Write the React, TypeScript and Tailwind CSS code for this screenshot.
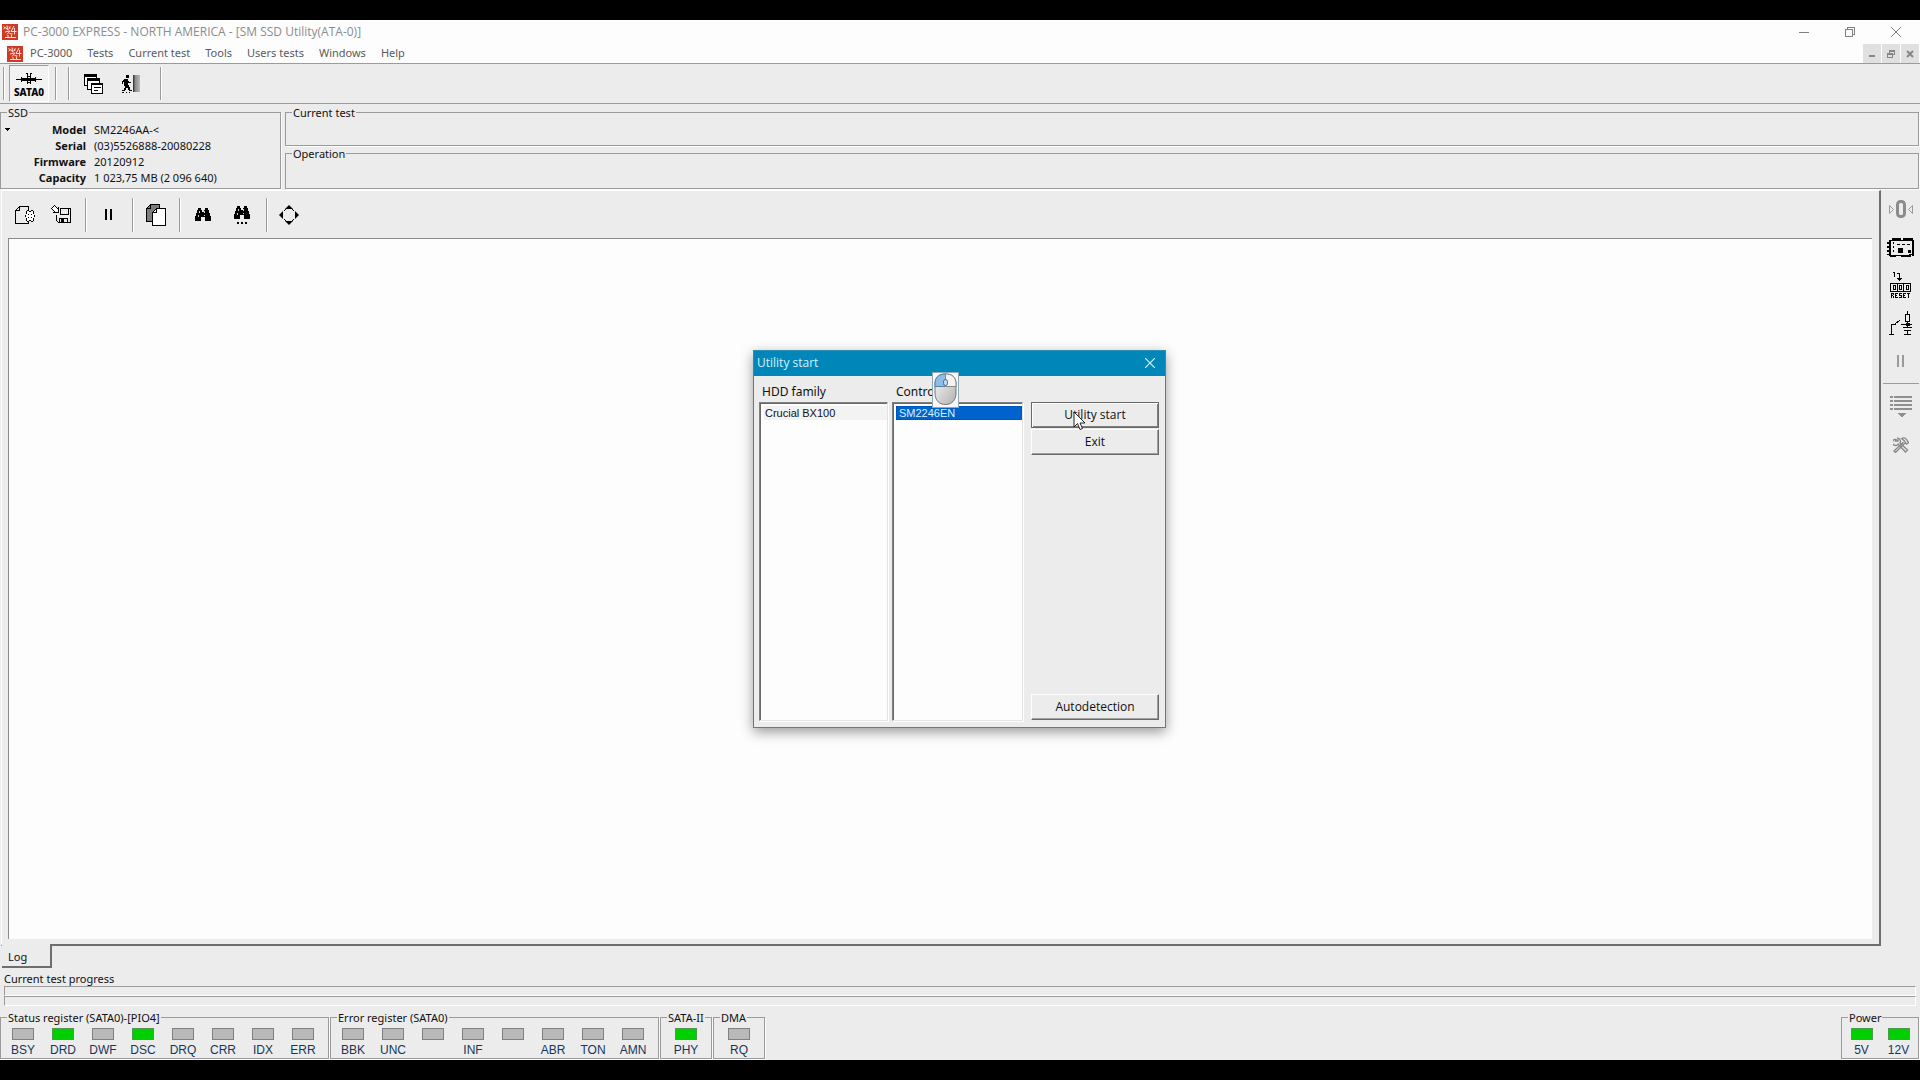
import type { ReactNode } from "react";

const UI = "font-['Noto_Sans',sans-serif]";

function Pix({ w, h, label, children }: { w: number; h: number; label?: string; children: ReactNode }) {
  return (
    <svg width={w} height={h} viewBox={`0 0 ${w} ${h}`} shapeRendering="crispEdges" fill="none" stroke="none" aria-label={label} className="shrink-0">
      {children}
    </svg>
  );
}

function AppLogo() {
  return (
    <svg width="16" height="16" viewBox="0 0 16 16" className="shrink-0">
      <rect width="16" height="16" fill="#cf3a24" />
      <path d="M1.500 2.500l2 1.500M1.500 5l2-1.500 2.500 3M5 1.500l.5 4M7 2.500l1 2.500M6.500 5.500l2-3M3 8l5-1-3 3.500M12 2L9 7.500h5.500M12.500 4v6.500M7.500 9.500l3 .5M3 13.500h11M6 11v2M9.500 10.500v2.500" stroke="#fbe3dd" fill="none" />
    </svg>
  );
}

function Group({ title, className, children }: { title: string; className: string; children?: ReactNode }) {
  return (
    <fieldset className={`min-w-0 border border-[#9b9b9b] shadow-[1px_1px_0_#fbfbfb] ${className}`}>
      <legend className="ml-[6px] px-px pt-[2px] leading-[12px] whitespace-nowrap">{title}</legend>
      {children}
    </fieldset>
  );
}

function Led({ on, label, wide }: { on?: boolean; label: string; wide?: boolean }) {
  return (
    <div className={`flex flex-col items-center ${wide ? "w-[37px]" : "w-10"}`}>
      <span className={`h-3 w-[22px] border ${on ? "border-[#4f9a4f] bg-[#00d000]" : "border-[#808080] bg-[#b9b9b9]"}`} />
      <span className="mt-[2px] h-4 font-['Liberation_Sans',sans-serif] text-[12px] leading-4 text-[#16365c]">{label}</span>
    </div>
  );
}

function VSep({ className }: { className: string }) {
  return <span className={`w-[2px] shrink-0 border-l border-[#9b9b9b] bg-white ${className}`} />;
}

function IconButton({ label, className, children }: { label: string; className: string; children: ReactNode }) {
  return (
    <button type="button" aria-label={label} className={`flex shrink-0 items-center justify-center ${className}`}>
      {children}
    </button>
  );
}

const menus = ["PC-3000", "Tests", "Current test", "Tools", "Users tests", "Windows", "Help"];

const info = [
  ["Model", "SM2246AA-<"],
  ["Serial", "(03)5526888-20080228"],
  ["Firmware", "20120912"],
  ["Capacity", "1 023,75 MB (2 096 640)"],
];

const status: [string, boolean][] = [
  ["BSY", false], ["DRD", true], ["DWF", false], ["DSC", true],
  ["DRQ", false], ["CRR", false], ["IDX", false], ["ERR", false],
];
const errors = ["BBK", "UNC", "", "INF", "", "ABR", "TON", "AMN"];

function TitleBar() {
  return (
    <header className="flex h-6 shrink-0 items-center bg-[#fdfdfd] pr-px pb-px pl-[2px]">
      <AppLogo />
      <h1 className="ml-[5px] font-['Open_Sans',sans-serif] text-[12px] text-[#8c8c8c]">PC-3000 EXPRESS - NORTH AMERICA - [SM SSD Utility(ATA-0)]</h1>
      <div className="ml-auto flex h-full">
        <IconButton label="Minimize" className="w-[46px]">
          <Pix w={10} h={10}><path d="M0 5h10v1H0z" fill="#808080" /></Pix>
        </IconButton>
        <IconButton label="Restore" className="w-[46px]">
          <Pix w={10} h={10}><path d="M.5 2.500h7v7h-7zM2.500 2.500v-2h7v7h-2" stroke="#808080" /></Pix>
        </IconButton>
        <IconButton label="Close" className="w-[46px]">
          <svg width="10" height="10" viewBox="0 0 10 10"><path d="M0 0l10 10M10 0L0 10" stroke="#808080" /></svg>
        </IconButton>
      </div>
    </header>
  );
}

function MenuBar() {
  return (
    <nav className="flex h-5 shrink-0 items-center border-b border-[#9b9b9b] bg-[#fdfdfd] pl-[7px]">
      <AppLogo />
      <div className="flex gap-[15px] pb-px pl-[7px]">
        {menus.map((m) => (
          <button key={m} type="button" className="leading-4 text-[#5a5a5a]">{m}</button>
        ))}
      </div>
      <div className="ml-auto flex h-full gap-px pr-px">
        <IconButton label="Minimize document" className="w-[18px] bg-[#e0e0e0]">
          <Pix w={10} h={10}><path d="M2 6h6v2H2z" fill="#868686" /></Pix>
        </IconButton>
        <IconButton label="Restore document" className="w-[18px] bg-[#e0e0e0]">
          <Pix w={10} h={10}><path d="M3 1h6v2H3zM8 3h1v3H8zM1 4h6v2H1zM1 6h1v3H1zM6 6h1v3H6zM1 8h6v1H1zM3 3h1v1H3zM7 5h1v1H7z" fill="#868686" /></Pix>
        </IconButton>
        <IconButton label="Close document" className="w-[18px] bg-[#e0e0e0]">
          <svg width="10" height="10" viewBox="0 0 10 10"><path d="M2 2l6 6M8 2L2 8" stroke="#868686" strokeWidth="2" /></svg>
        </IconButton>
      </div>
    </nav>
  );
}

function MainToolbar() {
  return (
    <div className="flex h-10 shrink-0 items-center border-b border-[#9b9b9b] pl-[3px]">
      <VSep className="h-[33px]" />
      <button type="button" aria-pressed="true" className="ml-1 flex h-[37px] w-10 flex-col items-center border border-t-[#9b9b9b] border-r-white border-b-white border-l-[#9b9b9b] bg-[#f2f2f2] pt-[7px]">
        <Pix w={26} h={12}>
          <path d="M0 6h5V4h1v1h13V4h1v2h6v1h-6v2h-1V8H6v1H5V7H0z" fill="#000" />
          <path d="M11 1h1v10h-1zM14 1h1v10h-1zM10 0h2v1h-2zM14 0h2v1h-2zM12 3h2v1h-2zM12 9h2v1h-2z" fill="#000" />
        </Pix>
        <span className="mt-px text-[10px] leading-3 font-extrabold text-black">SATA0</span>
      </button>
      <VSep className="ml-[6px] h-[33px]" />
      <VSep className="ml-[11px] h-[33px]" />
      <IconButton label="Windows" className="ml-[10px] size-7">
        <Pix w={20} h={20}>
          <rect x=".5" y=".5" width="12" height="11" fill="#fff" stroke="#000" />
          <path d="M1 1h11v2H1z" fill="#000" />
          <rect x="3.500" y="4.500" width="12" height="11" fill="#fff" stroke="#000" />
          <path d="M4 5h11v2H4z" fill="#000" />
          <rect x="7.500" y="9.500" width="11" height="10" fill="#fff" stroke="#000" />
          <path d="M8 10h10v1H8zM10 13h7v1h-7zM10 16h4v1h-4z" fill="#000" />
        </Pix>
      </IconButton>
      <IconButton label="Exit utility" className="ml-[9px] size-7">
        <Pix w={20} h={20}>
          <defs>
            <linearGradient id="door" x1="0" x2="1">
              <stop offset="0" stopColor="#222" />
              <stop offset=".3" stopColor="#888" />
              <stop offset="1" stopColor="#bbb" />
            </linearGradient>
          </defs>
          <rect x="12" y="1" width="7" height="17" fill="url(#door)" />
          <path d="M5 1h3v3H5zM3 5h4v2h1v1h1v1H7v2h1v2h1v3h2v1H8v-1H7v-2H5v2H4v1H1v-1h2v-2h1v-2H3V8H2v2H1V7h1V6h1zM9 8h1v1H9z" fill="#000" />
          <path d="M1 18h2v1H1zM5 18h1v1H5zM8 18h1v1H8z" fill="#000" />
        </Pix>
      </IconButton>
      <VSep className="ml-[15px] h-[33px]" />
    </div>
  );
}

function Binoculars({ next }: { next?: boolean }) {
  return (
    <Pix w={16} h={next ? 18 : 14}>
      <path d="M3 0h3v2h1v2h2V2h1V0h3v2h1v3h1v3h1v5h-6V9H6v4H0V8h1V5h1V2h1z" fill="#000" />
      <path d="M4 3h1v2H4zM3 7h1v2H3zM9 3h1v2H9zM9 7h1v1H9z" fill="#d0d0d0" />
      {next && <path d="M3 16h2v2H3zM7 16h2v2H7zM11 16h2v2h-2z" fill="#000" />}
    </Pix>
  );
}

function LogToolbar() {
  return (
    <div className="flex h-[47px] shrink-0 items-center">
      <IconButton label="New log" className="ml-px size-8">
        <Pix w={20} h={18}>
          <path d="M13.500 4V.5h-9l-4 4v13h13v-2M4.500.5v4h-4" stroke="#000" />
          <path d="M14 6h3v-2h1v3h1v2h1v2h-1v2h-1v3h-2v-1h-2v1h-2v-3h-1v-2h-1v-2h1v-1h1v-3h2v1z" fill="#fff" />
          <path d="M12 4h2v1h-2zM16 4h2v1h-2zM14 5h2v1h-2zM11 5h1v3h-1zM18 5h1v3h-1zM10 9h1v2h-1zM19 9h1v2h-1zM11 12h1v3h-1zM18 12h1v3h-1zM12 15h2v1h-2zM16 15h2v1h-2zM14 14h2v1h-2zM13 8h1v1h-1zM16 8h1v1h-1zM13 11h1v1h-1zM16 11h1v1h-1z" fill="#000" />
        </Pix>
      </IconButton>
      <IconButton label="Save log" className="ml-1 size-8">
        <Pix w={20} h={19}>
          <path d="M9 3.500h10.500v14H7.500l-2-2v-6M9.500 3.500v6h8v-6M8.500 17.500v-4h8v4" stroke="#000" />
          <path d="M10 14h3v3h-3z" fill="#000" />
          <path d="M.5 3.500l3-3 3 3 1-1v5h-5l1-1z" stroke="#000" fill="#fff" />
        </Pix>
      </IconButton>
      <VSep className="ml-2 h-[34px]" />
      <IconButton label="Pause" className="ml-[5px] size-8">
        <Pix w={7} h={11}><path d="M0 0h2v11H0zM5 0h2v11H5z" fill="#000" /></Pix>
      </IconButton>
      <VSep className="ml-2 h-[34px]" />
      <IconButton label="Copy" className="ml-[6px] size-8">
        <Pix w={20} h={22}>
          <path d="M4.500.5h9v17h-13v-13zM4.500.5v4h-4" fill="#7d7d7d" stroke="#000" />
          <path d="M10.500 4.500h9v17h-13v-13zM10.500 4.500v4h-4" fill="#fff" stroke="#000" />
        </Pix>
      </IconButton>
      <VSep className="ml-[7px] h-[34px]" />
      <IconButton label="Find" className="ml-[6px] size-8"><Binoculars /></IconButton>
      <IconButton label="Find next" className="ml-[7px] size-8"><Binoculars next /></IconButton>
      <VSep className="ml-2 h-[34px]" />
      <IconButton label="Full screen" className="ml-[5px] size-8">
        <svg width="20" height="20" viewBox="0 0 20 20">
          <path d="M10 0l4 4H6zM10 20l4-4H6zM0 10l4-4v8zM20 10l-4-4v8z" fill="#000" />
          <path d="M5 6l2-2M15 6l-2-2M5 14l2 2M15 14l-2 2" stroke="#000" />
        </svg>
      </IconButton>
    </div>
  );
}

function SideBar() {
  return (
    <aside className="flex w-[39px] shrink-0 flex-col items-center">
      <IconButton label="Counter" className="h-[38px] w-full">
        <svg width="24" height="18" viewBox="0 0 24 18">
          <path d="M.5 5.500v8l4-4zM23.500 5.500v8l-4-4z" fill="none" stroke="#9a9a9a" />
          <rect x="8.500" y="1.500" width="7" height="15" rx="3" fill="none" stroke="#8c8c8c" strokeWidth="3" />
        </svg>
      </IconButton>
      <IconButton label="Board" className="h-[38px] w-full pt-[2px]">
        <Pix w={27} h={20}>
          <path d="M3.500 2.500h2v-2h8v2h3v-2h9v16h-3v2H15v-1H8v1H3.500z" stroke="#000" />
          <path d="M5 0h8v3H5zM16 0h9v3h-9zM2 2h2v16H2zM0 4h2v2H0zM0 8h2v2H0zM0 12h2v2H0zM0 16h2v1H0zM6 4h1v2H6zM6 8h1v2H6zM6 12h1v2H6zM11 10h5v5h-5zM21 12h3v3h-3zM10 6h3v1h-3zM15 6h3v1h-3zM20 6h3v1h-3zM25 2h2v16h-2zM4 17h4v2H4zM10 17h2v1h-2zM14 17h10v2H14z" fill="#000" />
        </Pix>
      </IconButton>
      <IconButton label="Reset" className="h-[38px] w-full">
        <Pix w={21} h={26}>
          <path d="M3 0h2v5H4V1H3zM7 1h3v5h2L9.500 9 7 6h2V2H7z" fill="#000" />
          <path d="M.5 11.500h20v8H.5zM7.500 11.500v8M13.500 11.500v8M3 13.500h2v4H3zM9.500 13.500h2v4h-2zM16 13.500h2v4h-2z" stroke="#000" />
          <path d="M1 21h3v1H1zM1 21h1v5H1zM3 22h1v1H3zM2 23h1v1H2zM3 24h1v2H3zM5 21h3v1H5zM5 23h2v1H5zM5 25h3v1H5zM5 21h1v5H5zM9 21h3v1H9zM9 23h3v1H9zM9 25h3v1H9zM9 22h1v1H9zM11 24h1v1h-1zM13 21h3v1h-3zM13 23h2v1h-2zM13 25h3v1h-3zM13 21h1v5h-1zM17 21h3v1h-3zM18 21h1v5h-1z" fill="#000" />
        </Pix>
      </IconButton>
      <IconButton label="Power switch" className="h-[38px] w-full">
        <Pix w={24} h={24}>
          <path d="M0 23.500h5M2.500 23v-9.500h4M6 13l5-4M18.500 0v3M16.500 3.500h4v7h-4zM18.500 11v5M12 13.500h11M14 16.500h9M15 19.500h7M18.500 19v4M15 23.500h7" stroke="#000" />
          <path d="M17 12h4v3h-4z" fill="#000" />
        </Pix>
      </IconButton>
      <IconButton label="Pause power" className="h-[38px] w-full">
        <Pix w={8} h={12}><path d="M0 0h2v12H0zM5 0h2v12H5z" fill="#9a9a9a" /></Pix>
      </IconButton>
      <hr className="mt-[3px] mb-1 w-9 border-t border-[#9b9b9b]" />
      <IconButton label="List" className="h-[38px] w-full">
        <Pix w={22} h={22}>
          <path d="M0 0h3v2H0zM4 0h18v2H4zM0 4h3v2H0zM4 4h18v2H4zM0 8h3v2H0zM4 8h18v2H4zM0 12h3v2H0zM4 12h18v2H4zM8 17h8l-4 5z" fill="#8f8f8f" />
        </Pix>
      </IconButton>
      <IconButton label="Tools" className="h-[38px] w-full">
        <svg width="16" height="16" viewBox="0 0 16 16" fill="none" stroke="#858585" strokeWidth="1.300">
          <path d="M3 2.500a3 3 0 1 0 2 4.500l7.500 8L14.500 13 7 6A3.500 3.500 0 0 0 5 1v3L2.500 4z" />
          <path d="M8.500 1.500c2-1 4-.5 5 1l2 3-2 1.500-2-3zM10.500 5L1 14l1.500 1.500L12 6" />
        </svg>
      </IconButton>
    </aside>
  );
}

const raised = "border border-t-white border-l-white border-r-[#696969] border-b-[#696969] shadow-[inset_-1px_-1px_0_#a0a0a0]";
const sunken = "border border-t-[#808080] border-l-[#808080] border-r-[#e3e3e3] border-b-[#e3e3e3] shadow-[inset_1px_1px_0_#696969,1px_1px_0_#fff]";

function UtilityDialog() {
  return (
    <section role="dialog" aria-label="Utility start" className="relative flex h-[378px] w-[413px] flex-col border border-[#2a8fb0] bg-[#ececec] shadow-[0_4px_12px_rgba(0,0,0,0.4)]">
      <header className="flex h-[25px] shrink-0 items-center justify-between bg-[#0086b9] pr-[10px] pb-px pl-[3px]">
        <h2 className="font-['Open_Sans',sans-serif] text-[12px] text-[#d5f1fb]">Utility start</h2>
        <button type="button" aria-label="Close dialog">
          <svg width="10" height="10" viewBox="0 0 10 10"><path d="M0 0l10 10M10 0L0 10" stroke="#d9f3fb" strokeWidth="1.200" /></svg>
        </button>
      </header>
      <div className="flex flex-1 gap-1 pt-2 pr-[6px] pb-[6px] pl-[5px]">
        <div className="flex w-[129px] flex-col">
          <span id="family" className="h-[18px] pl-[3px] text-[12px] leading-4">HDD family</span>
          <div role="listbox" aria-labelledby="family" className={`flex-1 bg-[#fdfdfd] py-[3px] pl-1 ${sunken}`}>
            <div role="option" aria-selected="false" className="h-[14px] bg-[#f3f3f3] pl-px font-['Liberation_Sans',sans-serif] text-[11px] leading-[14px]">Crucial BX100</div>
          </div>
        </div>
        <div className="flex w-[131px] flex-col">
          <span id="controller" className="h-[18px] pl-1 text-[12px] leading-4">Controller</span>
          <div role="listbox" aria-labelledby="controller" className={`flex-1 bg-[#fdfdfd] py-[3px] pl-[3px] ${sunken}`}>
            <div role="option" aria-selected="true" className="h-[14px] border border-dotted border-[#2a3f70] bg-[#0062cc] pl-[2px] font-['Liberation_Sans',sans-serif] text-[11px] leading-3 text-[#d8f2ff]">SM2246EN</div>
          </div>
        </div>
        <div className="ml-1 flex flex-1 flex-col pt-[18px] pb-px font-['Open_Sans',sans-serif] text-[12px]">
          <button type="button" className="h-[26px] border border-[#696969] pb-px shadow-[inset_1px_1px_0_#fff,inset_-1px_-1px_0_#808080]">Utility start</button>
          <button type="button" className={`mt-px h-[26px] pb-px ${raised}`}>Exit</button>
          <button type="button" className={`mt-auto h-[26px] pb-px ${raised}`}>Autodetection</button>
        </div>
      </div>
      <svg width="27" height="36" viewBox="0 0 27 36" className="absolute top-[21px] left-[178px]">
        <defs>
          <linearGradient id="mouse" x1="0" y1="0" x2="1" y2="1">
            <stop offset="0" stopColor="#fafafa" />
            <stop offset="1" stopColor="#b0b0b0" />
          </linearGradient>
        </defs>
        <rect x=".5" y=".5" width="26" height="35" fill="#f8f8f8" stroke="#8fa9b5" />
        <path d="M3 12c0-7 4-10 10.500-10S24 5 24 12v9c0 7-4 11.500-10.500 11.500S3 28 3 21z" fill="url(#mouse)" stroke="#777" />
        <path d="M3 14.500V12c0-7 4-10 10.500-10v12.500z" fill="#8fbde6" stroke="#5580a8" />
        <path d="M13.500 14.500H24V12c0-7-4-10-10.500-10z" fill="#f4f4f4" stroke="#888" />
        <rect x="11.500" y="7.500" width="4" height="6" rx="2" fill="#b9d8f3" stroke="#667" />
      </svg>
      <svg width="13" height="20" viewBox="0 0 13 20" className="absolute top-[60px] left-[319px]">
        <path d="M1 1v15l3.500-3.500 2.500 6 2.500-1-2.500-5.500h5z" fill="#fff" stroke="#222" />
      </svg>
    </section>
  );
}

export default function App() {
  return (
    <div className={`relative flex min-h-screen flex-col bg-black py-5 text-[11px] leading-4 text-[#111] ${UI}`}>
      <div className="flex flex-1 flex-col bg-[#ececec]">
        <TitleBar />
        <MenuBar />
        <MainToolbar />

        <div className="flex shrink-0 gap-1 pt-px pr-px">
          <Group title="SSD" className="w-[281px] shrink-0">
            <div className="relative pt-[3px] pb-[2px]">
              <dl className="grid grid-cols-[85px_1fr] gap-x-2">
                {info.map(([k, v]) => (
                  <div key={k} className="contents">
                    <dt className="text-right font-bold">{k}</dt>
                    <dd className="whitespace-nowrap">{v}</dd>
                  </div>
                ))}
              </dl>
              <button type="button" aria-label="SSD menu" className="absolute top-[9px] left-1">
                <Pix w={5} h={3}><path d="M0 0h5v1H0zM1 1h3v1H1zM2 2h1v1H2z" fill="#000" /></Pix>
              </button>
            </div>
          </Group>
          <div className="flex flex-1 flex-col">
            <Group title="Current test" className="h-[41px]" />
            <Group title="Operation" className="flex-1" />
          </div>
        </div>

        <div className="mt-px flex flex-1">
          <div className="flex min-w-0 flex-1 flex-col">
            <div className="ml-px flex flex-1 flex-col border-t border-r-2 border-b-2 border-l border-t-white border-r-[#6e6e6e] border-b-[#6e6e6e] border-l-white pr-[7px] pb-[5px] pl-[6px]">
              <LogToolbar />
              <div role="log" aria-label="Log" className="flex-1 border-t border-l border-[#8a8a8a] bg-[#fdfdfd]" />
            </div>
          </div>
          <SideBar />
        </div>

        <div role="tablist" className="relative -mt-[2px] ml-[2px] flex shrink-0">
          <button type="button" role="tab" aria-selected="true" className="h-6 w-[50px] border-r-2 border-b-2 border-[#6e6e6e] bg-[#ececec] pt-[3px] pl-[6px] text-left">Log</button>
        </div>

        <div className="shrink-0 pt-[3px] pr-1 pl-1">
          <p id="progress">Current test progress</p>
          <div role="progressbar" aria-labelledby="progress" aria-valuenow={0} className="-mt-px h-[10px] border border-t-[#9b9b9b] border-r-white border-b-white border-l-[#9b9b9b]" />
          <div role="progressbar" aria-label="Total progress" aria-valuenow={0} className="h-[10px] border border-t-[#9b9b9b] border-r-white border-b-white border-l-[#9b9b9b]" />
        </div>

        <footer className="mt-1 mb-px flex h-[49px] shrink-0 gap-px pr-px">
          <Group title="Status register (SATA0)-[PIO4]" className="w-[329px]">
            <div className="flex pt-[4px] pl-[2px]">
              {status.map(([l, on]) => <Led key={l} label={l} on={on} />)}
            </div>
          </Group>
          <Group title="Error register (SATA0)" className="w-[329px]">
            <div className="flex pt-[4px] pl-[2px]">
              {errors.map((l, i) => <Led key={i} label={l} />)}
            </div>
          </Group>
          <Group title="SATA-II" className="w-[52px]">
            <div className="flex justify-center pt-[4px]"><Led label="PHY" on /></div>
          </Group>
          <Group title="DMA" className="w-[52px]">
            <div className="flex justify-center pt-[4px]"><Led label="RQ" /></div>
          </Group>
          <Group title="Power" className="ml-auto w-[78px]">
            <div className="flex justify-center pt-[4px]">
              <Led label="5V" on wide />
              <Led label="12V" on wide />
            </div>
          </Group>
        </footer>
      </div>

      <div className="absolute inset-0 flex items-center justify-center pr-px pb-[2px]">
        <UtilityDialog />
      </div>
    </div>
  );
}
